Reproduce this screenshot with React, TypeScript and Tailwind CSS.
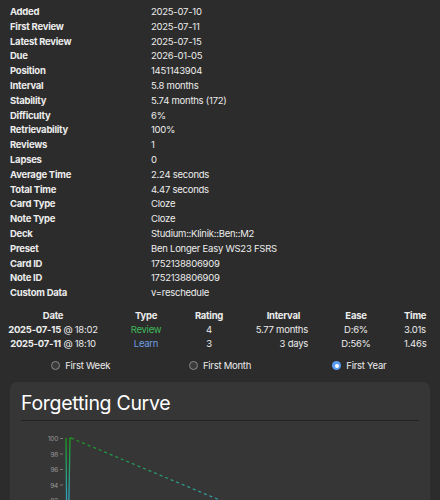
const info: [string, string][] = [
  ["Added", "2025-07-10"],
  ["First Review", "2025-07-11"],
  ["Latest Review", "2025-07-15"],
  ["Due", "2026-01-05"],
  ["Position", "1451143904"],
  ["Interval", "5.8 months"],
  ["Stability", "5.74 months (172)"],
  ["Difficulty", "6%"],
  ["Retrievability", "100%"],
  ["Reviews", "1"],
  ["Lapses", "0"],
  ["Average Time", "2.24 seconds"],
  ["Total Time", "4.47 seconds"],
  ["Card Type", "Cloze"],
  ["Note Type", "Cloze"],
  ["Deck", "Studium::Klinik::Ben::M2"],
  ["Preset", "Ben Longer Easy WS23 FSRS"],
  ["Card ID", "1752138806909"],
  ["Note ID", "1752138806909"],
  ["Custom Data", "v=reschedule"],
];

const revlog = [
  { day: "2025-07-15", time: "18:02", type: "Review", cls: "text-[#3fb95a]", rating: "4", ivl: "5.77 months", ease: "D:6%", t: "3.01s" },
  { day: "2025-07-11", time: "18:10", type: "Learn", cls: "text-[#6f9fe0]", rating: "3", ivl: "3 days", ease: "D:56%", t: "1.46s" },
];

function Radio({ label, checked }: { label: string; checked?: boolean }) {
  return (
    <label className="flex items-center justify-center gap-[5px]">
      {checked ? (
        <span className="flex h-[9px] w-[9px] items-center justify-center rounded-full bg-[#5c9cf0]">
          <span className="h-[4px] w-[4px] rounded-full bg-white" />
        </span>
      ) : (
        <span className="h-[9px] w-[9px] rounded-full border border-[#8a8a8a] bg-[#3a3a3a]" />
      )}
      <span>{label}</span>
    </label>
  );
}

const row = "grid grid-cols-[90px_96px_30px_84px_96px_1fr] leading-[14px]";

export default function App() {
  return (
    <div className="min-h-screen bg-[#2c2c2c] text-[#ececec] [font-family:Inter,'Liberation_Sans',sans-serif] text-[9.5px] tracking-[-0.25px]">
      {/* card info */}
      <div className="px-[10px] pt-[5px]">
        {info.map(([k, v]) => (
          <div key={k} className="grid grid-cols-[141px_1fr] leading-[14.8px]">
            <span className="font-bold">{k}</span>
            <span>{v}</span>
          </div>
        ))}
      </div>

      {/* review log */}
      <div className="mx-[8px] mt-[8px] w-[417px]">
        <div className={row + " font-bold"}>
          <span className="text-center">Date</span>
          <span className="text-center">Type</span>
          <span className="text-center">Rating</span>
          <span className="pr-[8px] text-right">Interval</span>
          <span className="text-center">Ease</span>
          <span className="text-right">Time</span>
        </div>
        {revlog.map((r) => (
          <div key={r.day} className={row}>
            <span className="whitespace-nowrap text-center">
              <b>{r.day}</b> @ {r.time}
            </span>
            <span className={"text-center " + r.cls}>{r.type}</span>
            <span className="text-center">{r.rating}</span>
            <span className="text-right">{r.ivl}</span>
            <span className="text-center">{r.ease}</span>
            <span className="text-right">{r.t}</span>
          </div>
        ))}
      </div>

      {/* range selector */}
      <div className="mx-[11px] mt-[8px] grid grid-cols-3 leading-[14px]">
        <Radio label="First Week" />
        <Radio label="First Month" />
        <Radio label="First Year" checked />
      </div>

      {/* forgetting curve */}
      <div className="mx-[10px] mt-[9px] rounded-[7px] bg-[#363636] px-[11px] pt-[8px] pb-4">
        <h1 className="text-[19.5px] leading-[26px] tracking-[-0.3px] text-white">Forgetting Curve</h1>
        <div className="mt-[4px] h-px bg-[#232323]" />
        <svg width="404" height="120" className="-ml-[11px] mt-[9px]">
          <defs>
            <linearGradient id="g" x1="0" y1="0" x2="0" y2="1">
              <stop offset="0" stopColor="#1a9a1a" />
              <stop offset="0.5" stopColor="#2fa3b5" />
            </linearGradient>
            <linearGradient id="d" x1="0" y1="0" x2="1" y2="0">
              <stop offset="0" stopColor="#1a9a1a" />
              <stop offset="1" stopColor="#2fa3b5" />
            </linearGradient>
          </defs>
          {["100", "98", "96", "94", "92"].map((l, i) => (
            <g key={l}>
              <text x="48" y={11 + i * 15.5} textAnchor="end" fontSize="6.5" fill="#9a9a9a">
                {l}
              </text>
              <line x1="50" x2="53" y1={8.5 + i * 15.5} y2={8.5 + i * 15.5} stroke="#777" />
            </g>
          ))}
          <polyline points="56,8 57,120" stroke="url(#g)" strokeWidth="1.3" fill="none" />
          <polyline points="58,120 60,8 61,8" stroke="url(#g)" strokeWidth="1.3" fill="none" />
          <line x1="61" y1="8" x2="212" y2="71" stroke="url(#d)" strokeWidth="1.2" strokeDasharray="3 3" />
        </svg>
      </div>
    </div>
  );
}
